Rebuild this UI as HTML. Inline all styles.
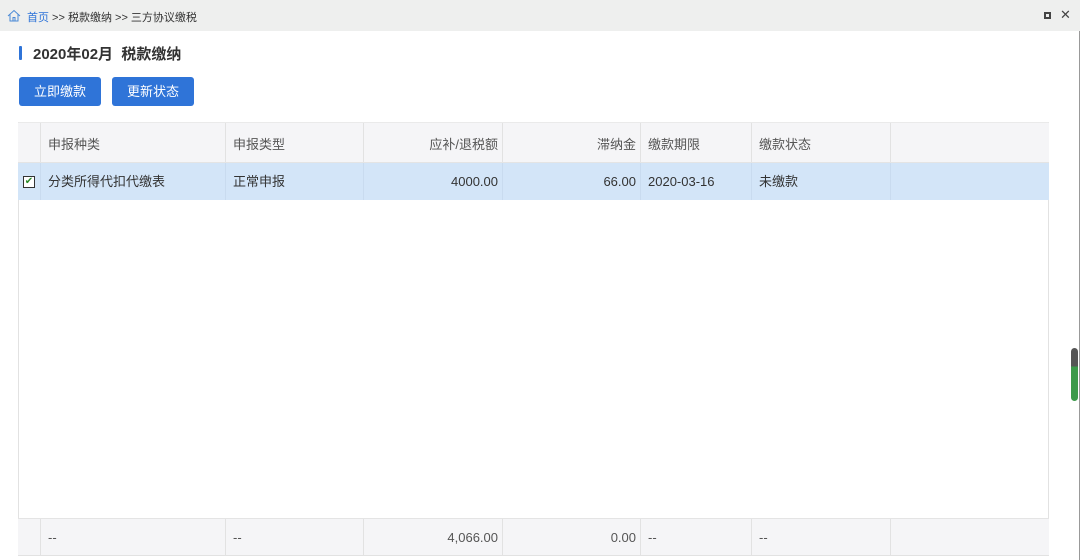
<!DOCTYPE html>
<html><head><meta charset="utf-8"><style>
*{margin:0;padding:0;box-sizing:border-box}
body{width:1080px;height:560px;background:#fff;font-family:"Liberation Sans","Noto Sans CJK SC",sans-serif;color:#333;position:relative;overflow:hidden;font-size:13px}
.top{position:absolute;left:0;top:0;width:1080px;height:31px;background:#eeefee}
.a{position:absolute}
.btn{position:absolute;top:77px;height:29px;background:#2f74d8;color:#fff;border-radius:3px;font-size:13px;line-height:29px;text-align:center}
.c{position:absolute;height:100%;border-right:1px solid #e2e2e2;line-height:inherit;padding:0 4px 0 7px;white-space:nowrap}
.row{position:absolute;left:18px;width:1031px}
.r{text-align:right}
</style></head><body>
<div class="top"></div>
<svg class="a" style="left:7px;top:9px" width="14" height="13" viewBox="0 0 14 13"><path d="M1 7 L7 1.5 L13 7 M3 5.5 V12 H11 V5.5 M6 12 V8.5 H8 V12" fill="none" stroke="#4a8ad6" stroke-width="1"/></svg>
<div class="a" style="left:27px;top:9px;font-size:11px;color:#333"><span style="color:#2f74d8">首页</span> &gt;&gt; 税款缴纳 &gt;&gt; 三方协议缴税</div>
<div class="a" style="left:1044px;top:12px;width:7px;height:7px;border:2px solid #444"></div>
<div class="a" style="left:1060px;top:7px;font-size:13px;color:#444">✕</div>
<div class="a" style="left:19px;top:46px;width:3px;height:14px;background:#2f74d8;border-radius:1px"></div>
<div class="a" style="left:33px;top:43px;font-size:15px;font-weight:bold;color:#333">2020年02月&nbsp; 税款缴纳</div>
<div class="btn" style="left:19px;width:82px">立即缴款</div>
<div class="btn" style="left:112px;width:82px">更新状态</div>
<div class="a" style="left:18px;top:122px;width:1031px;height:434px;border:1px solid #e2e2e2;border-top:2px solid #eaeaea"></div>
<div class="row" style="top:123px;height:40px;line-height:43px;background:#f5f5f7;border-bottom:1px solid #e4e4e4;color:#555">
<div class="c" style="left:0;width:23px"></div>
<div class="c" style="left:23px;width:185px">申报种类</div>
<div class="c" style="left:208px;width:138px">申报类型</div>
<div class="c r" style="left:346px;width:139px">应补/退税额</div>
<div class="c r" style="left:485px;width:138px">滞纳金</div>
<div class="c" style="left:623px;width:111px">缴款期限</div>
<div class="c" style="left:734px;width:139px">缴款状态</div>
</div>
<div class="row" style="top:163px;height:37px;line-height:38px;background:#d3e5f8;color:#333">
<div class="c" style="left:0;width:23px;border-color:#c9dbef"><div class="a" style="left:5px;top:13px;width:12px;height:12px;border:1px solid #333;background:#fff;line-height:10px;font-size:10px;color:#2a8a2a;text-align:center">✔</div></div>
<div class="c" style="left:23px;width:185px;border-color:#c9dbef">分类所得代扣代缴表</div>
<div class="c" style="left:208px;width:138px;border-color:#c9dbef">正常申报</div>
<div class="c r" style="left:346px;width:139px;border-color:#c9dbef">4000.00</div>
<div class="c r" style="left:485px;width:138px;border-color:#c9dbef">66.00</div>
<div class="c" style="left:623px;width:111px;border-color:#c9dbef">2020-03-16</div>
<div class="c" style="left:734px;width:139px;border-color:#c9dbef">未缴款</div>
</div>
<div class="row" style="top:518px;height:37px;line-height:38px;background:#f5f5f7;border-top:1px solid #e4e4e4;color:#555">
<div class="c" style="left:0;width:23px"></div>
<div class="c" style="left:23px;width:185px">--</div>
<div class="c" style="left:208px;width:138px">--</div>
<div class="c r" style="left:346px;width:139px">4,066.00</div>
<div class="c r" style="left:485px;width:138px">0.00</div>
<div class="c" style="left:623px;width:111px">--</div>
<div class="c" style="left:734px;width:139px">--</div>
</div>
<div class="a" style="left:1079px;top:31px;width:1px;height:529px;background:#999"></div>
<div class="a" style="left:1071px;top:348px;width:7px;height:53px;border-radius:4px;background:linear-gradient(#555 0,#555 35%,#3c9a4a 35%,#3c9a4a 100%)"></div>
</body></html>
